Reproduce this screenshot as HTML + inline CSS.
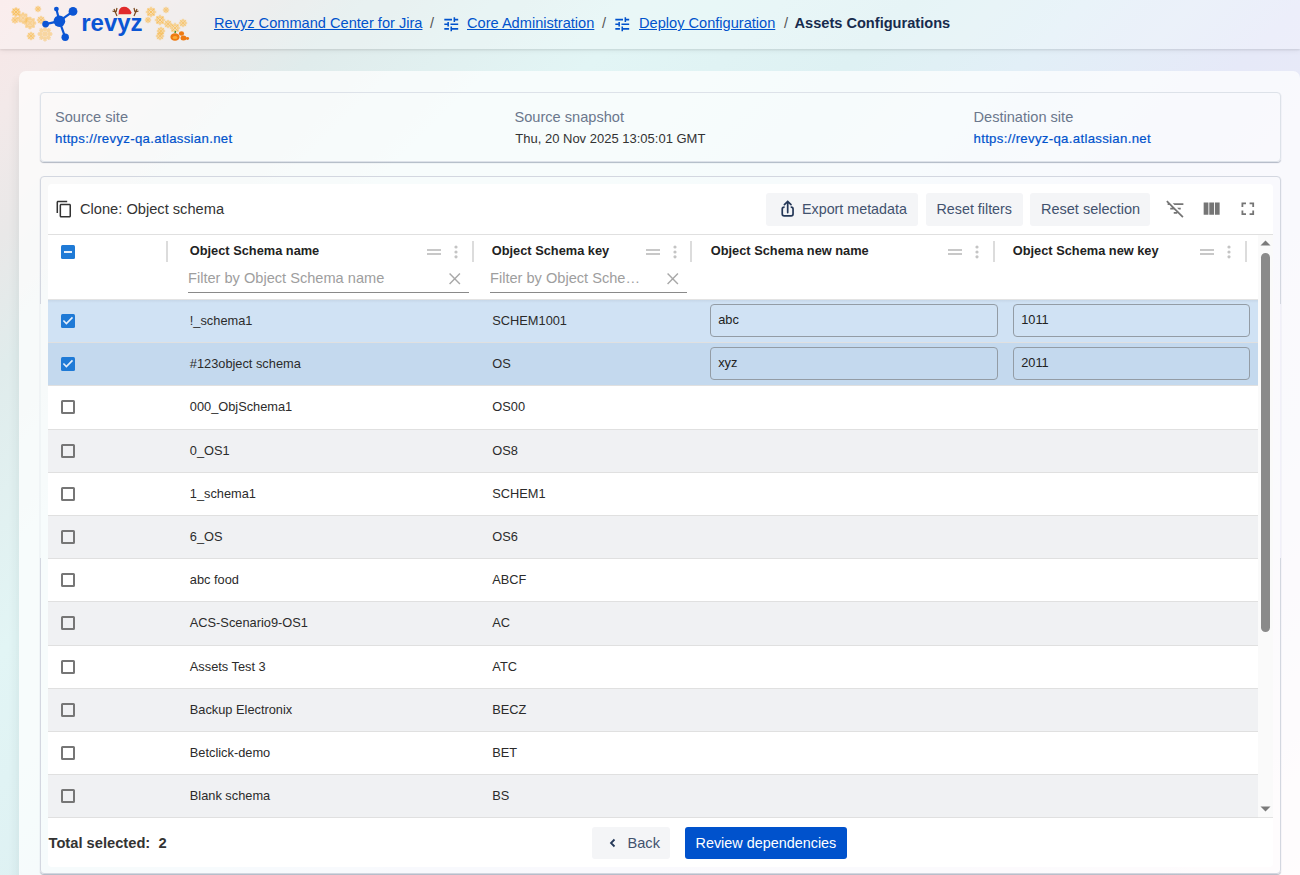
<!DOCTYPE html>
<html><head><meta charset="utf-8">
<style>
*{box-sizing:border-box}
html,body{margin:0;padding:0}
body{width:1300px;height:875px;overflow:hidden;position:relative;font-family:"Liberation Sans",sans-serif;color:#172b4d;
background:linear-gradient(135deg,#f9e7e7 0%,#f3e9e9 5%,#e9e8e8 11%,#e0ecec 17%,#e2f5f5 30%,#def1f3 42%,#e2eff7 50%,#e6e9f8 60%,#eeebf8 80%,#fdf4f7 100%)}
.abs{position:absolute}
.icon{position:absolute;overflow:visible}
#hdr{left:0;top:0;width:1300px;height:49px;background:rgba(255,255,255,0.25);box-shadow:0 1px 2px rgba(0,0,0,0.10),0 2px 6px rgba(0,0,0,0.05)}
.bc{position:absolute;top:14px;font-size:14.6px;line-height:18px;white-space:nowrap}
.bc a{color:#0052cc;text-decoration:underline;text-underline-offset:1px}
.sep{color:#555}
#outer{left:19px;top:71px;width:1281px;height:900px;border-radius:7px;background:rgba(255,255,255,0.72);box-shadow:-3px 8px 10px rgba(0,50,50,0.06)}
#card1{left:40px;top:92px;width:1241px;height:70px;border:1px solid #dde2e9;border-radius:4px;box-shadow:0 1px 1px rgba(9,30,66,0.30)}
.lbl{position:absolute;top:109px;font-size:14.6px;color:#6b778c;white-space:nowrap}
.val{position:absolute;top:131px;font-size:13px;color:#333;white-space:nowrap}
.url{color:#0052cc;font-size:13.2px;letter-spacing:0.32px;-webkit-text-stroke:0.2px #0052cc}
#card2{left:40px;top:176px;width:1241px;height:698px;border:1px solid #d3d7e0;border-radius:4px;box-shadow:0 1px 1px rgba(9,30,66,0.30)}
#white{left:48px;top:184px;width:1225px;height:683px;background:#fff;border-radius:4px}
.tbtn{position:absolute;top:193px;height:33px;background:#f4f5f7;border-radius:3px;font-size:14.5px;color:#42526e;line-height:33px;white-space:nowrap}
.title{position:absolute;left:80px;top:200px;font-size:14.65px;color:#333;white-space:nowrap;line-height:18px}
.th{position:absolute;top:243px;font-size:12.8px;font-weight:bold;color:#222;white-space:nowrap;line-height:16px}
.flt{position:absolute;top:269.2px;font-size:14.6px;color:#9e9e9e;white-space:nowrap;line-height:18px}
.ful{position:absolute;top:292px;height:1px;background:#8a8a8a}
.csep{position:absolute;top:241px;width:2px;height:20.5px;background:#dcdcdc}
.dh{position:absolute;width:14.5px;height:1.7px;background:#c8c8c8}
.row{position:absolute;left:48px;width:1210px;border-bottom:1px solid #e0e0e0}
.cell{position:absolute;font-size:12.8px;color:#2b2b2b;white-space:nowrap;line-height:16px}
.cb{position:absolute;left:61px;width:14px;height:14px;border-radius:1.5px}
.cbu{border:2px solid #767676;}
.cbc{background:#1f7ad6}
.inp{position:absolute;height:33px;border:1px solid #939ca5;border-radius:4px;font-size:12.8px;color:#222;line-height:30px;padding-left:7.2px}
</style></head><body>
<div id="hdr" class="abs"></div>
<svg class="icon" style="left:0;top:0" width="200" height="49" viewBox="0 0 200 49"><defs><path id="sf" d="M0 0L6.00 0.00M2.60 0.00L3.99 -1.43M2.60 0.00L3.99 1.43M4.20 0.00L5.25 -1.08M4.20 0.00L5.25 1.08M0 0L4.24 4.24M1.84 1.84L3.84 1.81M1.84 1.84L1.81 3.84M2.97 2.97L4.47 2.95M2.97 2.97L2.95 4.47M0 0L0.00 6.00M0.00 2.60L1.43 3.99M0.00 2.60L-1.43 3.99M0.00 4.20L1.08 5.25M0.00 4.20L-1.08 5.25M0 0L-4.24 4.24M-1.84 1.84L-1.81 3.84M-1.84 1.84L-3.84 1.81M-2.97 2.97L-2.95 4.47M-2.97 2.97L-4.47 2.95M0 0L-6.00 0.00M-2.60 0.00L-3.99 1.43M-2.60 0.00L-3.99 -1.43M-4.20 0.00L-5.25 1.08M-4.20 0.00L-5.25 -1.08M0 0L-4.24 -4.24M-1.84 -1.84L-3.84 -1.81M-1.84 -1.84L-1.81 -3.84M-2.97 -2.97L-4.47 -2.95M-2.97 -2.97L-2.95 -4.47M0 0L-0.00 -6.00M-0.00 -2.60L-1.43 -3.99M-0.00 -2.60L1.43 -3.99M-0.00 -4.20L-1.08 -5.25M-0.00 -4.20L1.08 -5.25M0 0L4.24 -4.24M1.84 -1.84L1.81 -3.84M1.84 -1.84L3.84 -1.81M2.97 -2.97L2.95 -4.47M2.97 -2.97L4.47 -2.95" stroke="#f9bd52" stroke-width="1.15" stroke-linecap="round" fill="none"/></defs><use href="#sf" transform="translate(16 12) scale(0.750)" opacity="0.7"/><use href="#sf" transform="translate(23 18) scale(0.917)" opacity="0.6"/><use href="#sf" transform="translate(38 9) scale(0.500)" opacity="0.6"/><use href="#sf" transform="translate(30 23) scale(1.000)" opacity="0.6"/><use href="#sf" transform="translate(41 20) scale(0.667)" opacity="0.55"/><use href="#sf" transform="translate(15 20) scale(0.583)" opacity="0.55"/><use href="#sf" transform="translate(31 36) scale(0.667)" opacity="0.6"/><use href="#sf" transform="translate(45 34) scale(1.167)" opacity="0.5"/><use href="#sf" transform="translate(151 12) scale(0.833)" opacity="0.6"/><use href="#sf" transform="translate(166 10) scale(0.500)" opacity="0.55"/><use href="#sf" transform="translate(148 20) scale(0.500)" opacity="0.55"/><use href="#sf" transform="translate(160 20) scale(0.833)" opacity="0.6"/><use href="#sf" transform="translate(168 24) scale(0.667)" opacity="0.55"/><use href="#sf" transform="translate(183 23) scale(0.667)" opacity="0.55"/><use href="#sf" transform="translate(161 31) scale(0.667)" opacity="0.6"/><use href="#sf" transform="translate(175 28) scale(0.833)" opacity="0.55"/><use href="#sf" transform="translate(160 36) scale(0.667)" opacity="0.55"/>
<g stroke="#0b55d4" stroke-width="2.2"><line x1="59.4" y1="21.2" x2="56.4" y2="9.1"/><line x1="59.4" y1="21.2" x2="73" y2="11.4"/><line x1="59.4" y1="21.2" x2="45.6" y2="24.1"/><line x1="59.4" y1="21.2" x2="65.2" y2="37.3"/></g>
<g fill="#0b55d4"><circle cx="59.4" cy="21.2" r="5.8"/><circle cx="56.4" cy="9.1" r="2.4"/><circle cx="73" cy="11.4" r="4.4"/><circle cx="45.6" cy="24.1" r="3.4"/><circle cx="65.2" cy="37.3" r="3.7"/></g>
<path d="M118.5 15 Q118 7 124 6.8 Q129 6.8 131.5 12.5 L130.5 15 Z" fill="#e02a2a"/><rect x="118" y="14.3" width="15" height="2.8" rx="1.4" fill="#f7f2e4"/>
<g stroke="#7a4a1e" stroke-width="1.2" fill="none"><path d="M117 16 L114 9 M115.5 12 L112.5 11 M116 12 L117 8"/><path d="M134 16 L137 9 M135.5 12 L138.5 11 M135 12 L134 8"/></g>
<g fill="#ee7a12"><ellipse cx="181.5" cy="33.5" rx="2.6" ry="2.2"/><ellipse cx="183.5" cy="38" rx="3" ry="2.5"/><ellipse cx="187.5" cy="38.5" rx="1.6" ry="1.4"/><ellipse cx="175" cy="37" rx="4.6" ry="3.8"/></g><ellipse cx="175" cy="37.5" rx="2.5" ry="1.6" fill="#ffc048" opacity="0.7"/>
<path d="M175 33 L175.5 31" stroke="#3a8a2a" stroke-width="1.3"/>
</svg>
<div class="abs" style="left:81.2px;top:8.5px;font-size:24px;font-weight:bold;color:#0b55d4;line-height:28px">revyz</div>
<svg class="icon" style="left:441.7px;top:14.6px" width="18.5" height="18.5" viewBox="0 0 24 24"><path fill="#0052cc" d="M3 17v2h6v-2H3zM3 5v2h10V5H3zm10 16v-2h8v-2h-8v-2h-2v6h2zM7 9v2H3v2h4v2h2V9H7zm14 4v-2H11v2h10zm-6-4h2V7h4V5h-4V3h-2v6z"/></svg>
<svg class="icon" style="left:613.1px;top:14.6px" width="18.5" height="18.5" viewBox="0 0 24 24"><path fill="#0052cc" d="M3 17v2h6v-2H3zM3 5v2h10V5H3zm10 16v-2h8v-2h-8v-2h-2v6h2zM7 9v2H3v2h4v2h2V9H7zm14 4v-2H11v2h10zm-6-4h2V7h4V5h-4V3h-2v6z"/></svg>
<div class="bc" style="left:214px"><a>Revyz Command Center for Jira</a></div>
<div class="bc sep" style="left:430px">/</div>
<div class="bc" style="left:467px"><a>Core Administration</a></div>
<div class="bc sep" style="left:602px">/</div>
<div class="bc" style="left:639px"><a>Deploy Configuration</a></div>
<div class="bc sep" style="left:784px">/</div>
<div class="bc" style="left:794.5px;font-weight:bold;color:#172b4d">Assets Configurations</div>
<div id="outer" class="abs"></div>
<div id="card1" class="abs"></div>
<div class="lbl" style="left:55px">Source site</div>
<div class="val url" style="left:55px">https://revyz-qa.atlassian.net</div>
<div class="lbl" style="left:514.5px">Source snapshot</div>
<div class="val" style="left:515.3px">Thu, 20 Nov 2025 13:05:01 GMT</div>
<div class="lbl" style="left:973.5px">Destination site</div>
<div class="val url" style="left:973.5px">https://revyz-qa.atlassian.net</div>
<div id="card2" class="abs"></div>
<div id="white" class="abs"></div>
<div class="abs" style="left:40px;top:304px;width:1px;height:254px;background:#f0f5f6"></div><div class="abs" style="left:1280px;top:304px;width:1px;height:254px;background:#f1f0f9"></div>
<svg class="icon" style="left:55.4px;top:200.2px" width="18.3" height="18.3" viewBox="0 0 24 24"><path fill="#333" d="M16 1H4c-1.1 0-2 .9-2 2v14h2V3h12V1zm3 4H8c-1.1 0-2 .9-2 2v14c0 1.1.9 2 2 2h11c1.1 0 2-.9 2-2V7c0-1.1-.9-2-2-2zm0 16H8V7h11v14z"/></svg>
<div class="title">Clone: Object schema</div>
<div class="tbtn" style="left:766px;width:152px"><span style="position:absolute;left:36px;font-size:14.3px">Export metadata</span></div>
<svg class="icon" style="left:775px;top:196px" width="25" height="26" viewBox="0 0 25 26"><path d="M9.6 11.1H9.2Q7.25 11.1 7.25 13V18Q7.25 19.95 9.2 19.95H16.1Q18.05 19.95 18.05 18V13Q18.05 11.1 16.1 11.1H15.7" stroke="#253858" stroke-width="1.7" fill="none"/><path d="M12.7 16.6V5.8M9.4 8.7L12.7 5.4L16 8.7" stroke="#253858" stroke-width="1.7" fill="none" stroke-linecap="round"/></svg>
<div class="tbtn" style="left:926px;width:97px"><span style="position:absolute;left:10.5px;font-size:14.3px">Reset filters</span></div>
<div class="tbtn" style="left:1030px;width:120px"><span style="position:absolute;left:11px">Reset selection</span></div>
<svg class="icon" style="left:1164.8px;top:198.3px" width="21" height="21" viewBox="0 0 24 24"><path fill="#757575" d="M10.83 8H21V6H8.83l2 2zm5 5H18v-2h-4.17l2 2zM14 16.83V18h-4v-2h3.17l-3-3H6v-2h2.17l-3-3H3V6h.17L1.39 4.22 2.8 2.81l18.38 18.38-1.41 1.41L14 16.83z"/></svg>
<svg class="icon" style="left:1201.3px;top:197.8px" width="21.3" height="21.3" viewBox="0 0 24 24"><path fill="#757575" d="M14.67 5v14H9.33V5h5.34zm1 14H21V5h-5.33v14zm-7.34 0V5H3v14h5.33z"/></svg>
<svg class="icon" style="left:1237px;top:198px" width="21.6" height="21.6" viewBox="0 0 24 24"><path fill="#757575" d="M7 14H5v5h5v-2H7v-3zm-2-4h2V7h3V5H5v5zm12 7h-3v2h5v-5h-2v3zM14 5v2h3v3h2V5h-5z"/></svg>
<div class="abs" style="left:48px;top:234px;width:1225px;height:1px;background:#e0e0e0"></div>
<div class="cb cbc" style="top:245px"><div class="abs" style="left:3px;top:6px;width:7.8px;height:1.8px;background:#e6effa"></div></div>
<div class="csep" style="left:166px"></div>
<div class="csep" style="left:472px"></div>
<div class="csep" style="left:690px"></div>
<div class="csep" style="left:993px"></div>
<div class="csep" style="left:1245px"></div>
<div class="th" style="left:189.8px">Object Schema name</div>
<div class="th" style="left:491.8px">Object Schema key</div>
<div class="th" style="left:710.8px">Object Schema new name</div>
<div class="th" style="left:1012.8px">Object Schema new key</div>
<div class="flt" style="left:188px">Filter by Object Schema name</div>
<div class="ful" style="left:188px;width:281px"></div>
<div class="flt" style="left:490px">Filter by Object Sche…</div>
<div class="ful" style="left:490px;width:197px"></div>
<div class="dh" style="left:426.5px;top:249.2px"></div><div class="dh" style="left:426.5px;top:252.9px"></div><svg class="icon" style="left:452.8px;top:244px" width="6" height="16"><circle cx="3" cy="3" r="1.6" fill="#c4c4c4"/><circle cx="3" cy="8" r="1.6" fill="#c4c4c4"/><circle cx="3" cy="12.8" r="1.6" fill="#c4c4c4"/></svg>
<div class="dh" style="left:645.6px;top:249.2px"></div><div class="dh" style="left:645.6px;top:252.9px"></div><svg class="icon" style="left:671.5px;top:244px" width="6" height="16"><circle cx="3" cy="3" r="1.6" fill="#c4c4c4"/><circle cx="3" cy="8" r="1.6" fill="#c4c4c4"/><circle cx="3" cy="12.8" r="1.6" fill="#c4c4c4"/></svg>
<div class="dh" style="left:947.7px;top:249.2px"></div><div class="dh" style="left:947.7px;top:252.9px"></div><svg class="icon" style="left:973.7px;top:244px" width="6" height="16"><circle cx="3" cy="3" r="1.6" fill="#c4c4c4"/><circle cx="3" cy="8" r="1.6" fill="#c4c4c4"/><circle cx="3" cy="12.8" r="1.6" fill="#c4c4c4"/></svg>
<div class="dh" style="left:1199.5px;top:249.2px"></div><div class="dh" style="left:1199.5px;top:252.9px"></div><svg class="icon" style="left:1225.7px;top:244px" width="6" height="16"><circle cx="3" cy="3" r="1.6" fill="#c4c4c4"/><circle cx="3" cy="8" r="1.6" fill="#c4c4c4"/><circle cx="3" cy="12.8" r="1.6" fill="#c4c4c4"/></svg>
<svg class="icon" style="left:449px;top:273px" width="11.5" height="11.5" viewBox="0 0 12 12"><path d="M0.6 0.6L11.4 11.4M11.4 0.6L0.6 11.4" stroke="#a8a8a8" stroke-width="1.5"/></svg>
<svg class="icon" style="left:667px;top:273px" width="11.5" height="11.5" viewBox="0 0 12 12"><path d="M0.6 0.6L11.4 11.4M11.4 0.6L0.6 11.4" stroke="#a8a8a8" stroke-width="1.5"/></svg>
<div class="abs" style="left:48px;top:299.0px;width:1210px;height:1px;background:#e3e3e3"></div>
<div class="row" style="top:300.00px;height:43.20px;background:#d0e2f4"></div>
<div class="cell" style="left:189.8px;top:312.90px">!_schema1</div>
<div class="cell" style="left:492.3px;top:312.90px">SCHEM1001</div>
<div class="cb cbc" style="top:314.00px"><svg class="icon" style="left:0;top:0" width="14" height="14" viewBox="0 0 14 14"><path d="M2.4 6.5L5.4 9.6L11.5 3.4" stroke="#e6effa" stroke-width="1.6" fill="none"/></svg></div>
<div class="row" style="top:343.20px;height:43.20px;background:#c4d9ee"></div>
<div class="cell" style="left:189.8px;top:356.10px">#123object schema</div>
<div class="cell" style="left:492.3px;top:356.10px">OS</div>
<div class="cb cbc" style="top:357.20px"><svg class="icon" style="left:0;top:0" width="14" height="14" viewBox="0 0 14 14"><path d="M2.4 6.5L5.4 9.6L11.5 3.4" stroke="#e6effa" stroke-width="1.6" fill="none"/></svg></div>
<div class="row" style="top:386.40px;height:43.20px;background:#ffffff"></div>
<div class="cell" style="left:189.8px;top:399.30px">000_ObjSchema1</div>
<div class="cell" style="left:492.3px;top:399.30px">OS00</div>
<div class="cb cbu" style="top:400.40px"></div>
<div class="row" style="top:429.60px;height:43.20px;background:#f0f1f3"></div>
<div class="cell" style="left:189.8px;top:442.50px">0_OS1</div>
<div class="cell" style="left:492.3px;top:442.50px">OS8</div>
<div class="cb cbu" style="top:443.60px"></div>
<div class="row" style="top:472.80px;height:43.20px;background:#ffffff"></div>
<div class="cell" style="left:189.8px;top:485.70px">1_schema1</div>
<div class="cell" style="left:492.3px;top:485.70px">SCHEM1</div>
<div class="cb cbu" style="top:486.80px"></div>
<div class="row" style="top:516.00px;height:43.20px;background:#f0f1f3"></div>
<div class="cell" style="left:189.8px;top:528.90px">6_OS</div>
<div class="cell" style="left:492.3px;top:528.90px">OS6</div>
<div class="cb cbu" style="top:530.00px"></div>
<div class="row" style="top:559.20px;height:43.20px;background:#ffffff"></div>
<div class="cell" style="left:189.8px;top:572.10px">abc food</div>
<div class="cell" style="left:492.3px;top:572.10px">ABCF</div>
<div class="cb cbu" style="top:573.20px"></div>
<div class="row" style="top:602.40px;height:43.20px;background:#f0f1f3"></div>
<div class="cell" style="left:189.8px;top:615.30px">ACS-Scenario9-OS1</div>
<div class="cell" style="left:492.3px;top:615.30px">AC</div>
<div class="cb cbu" style="top:616.40px"></div>
<div class="row" style="top:645.60px;height:43.20px;background:#ffffff"></div>
<div class="cell" style="left:189.8px;top:658.50px">Assets Test 3</div>
<div class="cell" style="left:492.3px;top:658.50px">ATC</div>
<div class="cb cbu" style="top:659.60px"></div>
<div class="row" style="top:688.80px;height:43.20px;background:#f0f1f3"></div>
<div class="cell" style="left:189.8px;top:701.70px">Backup Electronix</div>
<div class="cell" style="left:492.3px;top:701.70px">BECZ</div>
<div class="cb cbu" style="top:702.80px"></div>
<div class="row" style="top:732.00px;height:43.20px;background:#ffffff"></div>
<div class="cell" style="left:189.8px;top:744.90px">Betclick-demo</div>
<div class="cell" style="left:492.3px;top:744.90px">BET</div>
<div class="cb cbu" style="top:746.00px"></div>
<div class="row" style="top:775.20px;height:43.20px;background:#f0f1f3"></div>
<div class="cell" style="left:189.8px;top:788.10px">Blank schema</div>
<div class="cell" style="left:492.3px;top:788.10px">BS</div>
<div class="cb cbu" style="top:789.20px"></div>
<div class="abs" style="left:48px;top:300px;width:1210px;height:3px;background:linear-gradient(rgba(0,0,0,0.05),rgba(0,0,0,0))"></div>
<div class="inp" style="left:710px;top:304px;width:288px">abc</div>
<div class="inp" style="left:1013px;top:304px;width:237px">1011</div>
<div class="inp" style="left:710px;top:347px;width:288px">xyz</div>
<div class="inp" style="left:1013px;top:347px;width:237px">2011</div>
<div class="abs" style="left:1258px;top:235px;width:15px;height:583px;background:#fafafa"></div>
<svg class="icon" style="left:1260px;top:239.4px" width="11" height="7"><path d="M0.5 6.5L5.5 1.5L10.5 6.5Z" fill="#7a7a7a"/></svg>
<div class="abs" style="left:1261px;top:253px;width:9px;height:379px;background:#8a8a8a;border-radius:4.5px"></div>
<div class="abs" style="left:1258px;top:817.4px;width:15px;height:1px;background:#e3e3e3"></div>
<svg class="icon" style="left:1260px;top:805.8px" width="11" height="7"><path d="M0.5 0.5L5.5 5.5L10.5 0.5Z" fill="#7a7a7a"/></svg>
<div class="abs" style="left:48.5px;top:834px;font-size:14.7px;font-weight:bold;color:#333;white-space:pre;line-height:18px">Total selected:  2</div>
<div class="abs" style="left:592px;top:827px;width:78px;height:32px;background:#f4f5f7;border-radius:3px"></div>
<svg class="icon" style="left:608px;top:836.5px" width="10" height="12" viewBox="0 0 10 12"><path d="M6.5 2.5L3 6L6.5 9.5" stroke="#253858" stroke-width="1.8" fill="none"/></svg>
<div class="abs" style="left:627.5px;top:834px;font-size:14.6px;color:#42526e;line-height:18px">Back</div>
<div class="abs" style="left:685px;top:827px;width:162px;height:32px;background:#0052cc;border-radius:3px"></div>
<div class="abs" style="left:695.5px;top:834px;font-size:14.4px;color:#fff;line-height:18px;white-space:nowrap">Review dependencies</div>
</body></html>
